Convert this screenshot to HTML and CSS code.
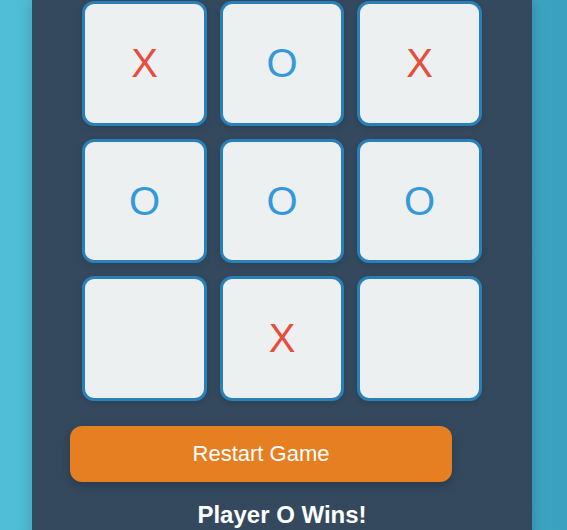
FILE: index.html
```html
<!DOCTYPE html>
<html lang="en">
<head>
  <meta charset="UTF-8">
  <meta name="viewport" content="width=device-width, initial-scale=1.0">
  <title>Tic Tac Toe</title>
  <link rel="stylesheet" href="styles.css">
</head>
<body>
  <div class="game-container">
    <div class="board">
      <div class="cell x">X</div>
      <div class="cell o">O</div>
      <div class="cell x">X</div>
      <div class="cell o">O</div>
      <div class="cell o">O</div>
      <div class="cell o">O</div>
      <div class="cell"></div>
      <div class="cell x">X</div>
      <div class="cell"></div>
    </div>
    <button class="restart-btn">Restart Game</button>
    <div class="status">Player O Wins!</div>
  </div>
</body>
</html>
```

FILE: styles.css
```css
html, body {
  height: 100%;
}

body {
  font-family: "Liberation Sans", Arial, sans-serif;
  margin: 0;
  overflow: hidden;
  background: linear-gradient(to right, #50bed7, #3aa2c0);
}

.game-container {
  width: 500px;
  margin-left: 32px;
  padding-top: 1.3px;
  min-height: 600px;
  background: #34495e;
  box-shadow: 0 0 14px rgba(0,0,0,0.18);
}

.board {
  display: grid;
  grid-template-columns: repeat(3, 124.5px);
  grid-auto-rows: 124.5px;
  gap: 13px;
  justify-content: center;
}

.cell {
  box-sizing: border-box;
  display: flex;
  align-items: center;
  justify-content: center;
  background: #ecf0f1;
  border: 3px solid #2980b9;
  border-radius: 12px;
  font-size: 40px;
  box-shadow: 0 2px 6px rgba(0,0,0,0.12);
}

.cell.x {
  color: #e74c3c;
}

.cell.o {
  color: #3498db;
}

.restart-btn {
  display: block;
  width: 382px;
  height: 56px;
  margin: 25px 0 0 38px;
  font-family: inherit;
  font-size: 22px;
  color: white;
  background: #e67e22;
  border: none;
  border-radius: 12px;
  box-shadow: 0 4px 10px rgba(0,0,0,0.2);
  cursor: pointer;
}

.status {
  margin-top: 19px;
  text-align: center;
  font-size: 24px;
  font-weight: bold;
  color: white;
}
```
